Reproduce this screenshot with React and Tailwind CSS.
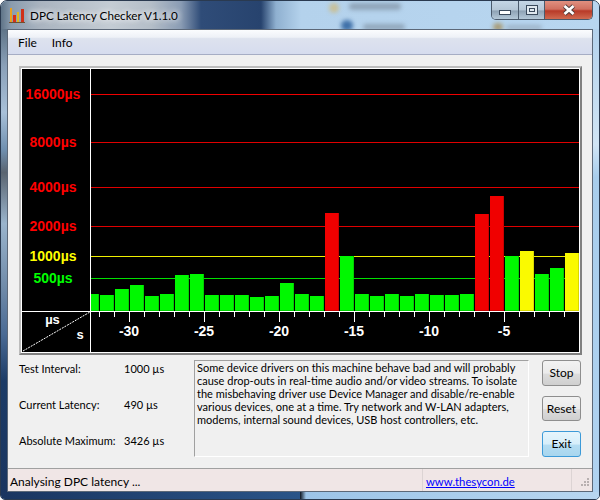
const BARS = [
  [91, 8, 294, 'g'], [100, 14, 295, 'g'], [115, 14, 289, 'g'], [130, 14, 285, 'g'], [145, 14, 296, 'g'],
  [160, 14, 294, 'g'], [175, 14, 275, 'g'], [190, 14, 274, 'g'], [205, 14, 295, 'g'], [220, 14, 295, 'g'],
  [235, 14, 295, 'g'], [250, 14, 297, 'g'], [265, 14, 296, 'g'], [280, 14, 283, 'g'], [295, 14, 294, 'g'],
  [310, 14, 296, 'g'], [325, 14, 213, 'r'], [340, 14, 256, 'g'], [355, 14, 294, 'g'], [370, 14, 296, 'g'],
  [385, 14, 294, 'g'], [400, 14, 296, 'g'], [415, 14, 294, 'g'], [430, 14, 295, 'g'], [445, 14, 295, 'g'],
  [460, 14, 294, 'g'], [475, 14, 214, 'r'], [490, 14, 196, 'r'], [505, 14, 256, 'g'], [520, 14, 251, 'y'],
  [535, 14, 274, 'g'], [550, 14, 268, 'g'], [565, 14, 253, 'y'],
]

const BAR_COLORS = {
  g: ['#00f800', '#00d000'],
  r: ['#f00000', '#c80000'],
  y: ['#fafa00', '#d8d800'],
}

const GRID = [
  { y: 94, base: 99, label: '16000µs', color: '#ff0000', line: '#f00000' },
  { y: 142, base: 147, label: '8000µs', color: '#ff0000', line: '#e00000' },
  { y: 187, base: 192, label: '4000µs', color: '#ff0000', line: '#e00000' },
  { y: 226, base: 231, label: '2000µs', color: '#ff0000', line: '#e00000' },
  { y: 256, base: 261, label: '1000µs', color: '#ffff00', line: '#f0f000' },
  { y: 278, base: 283, label: '500µs', color: '#00ff00', line: '#00e000' },
]

const AXIS = [
  [129, '-30'], [204, '-25'], [279, '-20'], [354, '-15'], [429, '-10'], [504, '-5'],
]

const NOTE = [
  'Some device drivers on this machine behave bad and will probably',
  'cause drop-outs in real-time audio and/or video streams. To isolate',
  'the misbehaving driver use Device Manager and disable/re-enable',
  'various devices, one at a time. Try network and W-LAN adapters,',
  'modems, internal sound devices, USB host controllers, etc.',
]

// the viewBox starts at the chart's page position, so all numbers here are page coordinates
function Chart() {
  const ticks = []
  for (let x = 99; x < 579; x += 15) ticks.push(x)

  return (
    <svg width="557" height="283" viewBox="22 69 557 283" className="block bg-black" shapeRendering="crispEdges">
      {GRID.map((g) => (
        <rect key={g.y} x="91" y={g.y} width="488" height="1" fill={g.line} />
      ))}
      {BARS.map(([x, w, top, c]) => (
        <g key={x}>
          <rect x={x} y={top} width={w} height={311 - top} fill={BAR_COLORS[c][1]} />
          <rect x={x} y={top} width={w - 1} height={310 - top} fill={BAR_COLORS[c][0]} />
        </g>
      ))}
      <rect x="90" y="69" width="1" height="283" fill="#fff" />
      <rect x="22" y="311" width="557" height="1" fill="#fff" />
      {ticks.map((x) => (
        <rect key={x} x={x} y="312" width="1" height={(x - 129) % 75 === 0 ? 10 : 5} fill="#fff" />
      ))}
      <line x1="23" y1="351" x2="90" y2="312" stroke="#fff" strokeDasharray="2 1" shapeRendering="auto" />
      <g fontFamily="'Liberation Sans', sans-serif" fontWeight="700" fontSize="14" textAnchor="middle">
        {GRID.map((g) => (
          <text key={g.label} x="53" y={g.base} fill={g.color}>{g.label}</text>
        ))}
        {AXIS.map(([x, t]) => (
          <text key={t} x={x} y="336" fill="#fff">{t}</text>
        ))}
        <text x="52.5" y="324" fill="#fff" fontSize="13">µs</text>
        <text x="80" y="339" fill="#fff" fontSize="13">s</text>
      </g>
    </svg>
  )
}

function AppIcon() {
  return (
    <svg width="16" height="16" viewBox="0 0 16 16" className="shrink-0" shapeRendering="crispEdges">
      <rect x="1" y="0" width="2" height="15" fill="#e8a020" />
      <rect x="4" y="7" width="3" height="8" fill="#d83018" />
      <rect x="8" y="4" width="2" height="11" fill="#e0b820" />
      <rect x="12" y="1" width="3" height="14" fill="#d03018" />
      <rect x="0" y="14" width="16" height="1" fill="#705030" />
    </svg>
  )
}

function WindowControls() {
  return (
    <div className="flex h-[19px] shrink-0 self-start overflow-hidden rounded-b-[5px] border border-t-0 border-[#4a5a6c]">
      <div className="flex w-[27px] items-center justify-center border-r border-[#4a5a6c] bg-[linear-gradient(#c4d6e6,#b4c6d6_50%,#8ea2b4_55%,#b4c8d8)] pt-[5px]">
        <div className="h-[5px] w-[12px] border border-[#3a4a5c] bg-white" />
      </div>
      <div className="flex w-[26px] items-center justify-center border-r border-[#4a5a6c] bg-[linear-gradient(#c4d6e6,#b4c6d6_50%,#8ea2b4_55%,#b4c8d8)]">
        <div className="flex h-[10px] w-[12px] items-center justify-center border border-[#3a4a5c] bg-[#dfe8ef]">
          <div className="h-[4px] w-[6px] border border-[#3a4a5c]" />
        </div>
      </div>
      <div className="flex w-[47px] items-center justify-center bg-[linear-gradient(#e09080,#d07060_45%,#b83a28_55%,#d06a50)]">
        <svg width="14" height="12" viewBox="0 0 14 12">
          <path d="M2.5 2 L11.5 10 M11.5 2 L2.5 10" stroke="#4a3a3a" strokeWidth="4.5" />
          <path d="M2.5 2 L11.5 10 M11.5 2 L2.5 10" stroke="#fff" strokeWidth="2.8" />
        </svg>
      </div>
    </div>
  )
}

function TitleBar() {
  return (
    <div className="relative flex h-[28px] shrink-0 overflow-hidden bg-[linear-gradient(90deg,#5f7488_0px,#8a9cae_10px,#aab4c0_40px,#c4ccd4_110px,#b4bec8_150px,#8a9cb4_180px,#2f4c78_200px,#27436e_260px,#8fb0d0_275px,#b4d2ec_300px,#b8d6f0_600px)]">
      {/* blurred desktop icons behind the glass */}
      <span className="absolute left-[328px] top-[2px] h-[10px] w-[10px] rounded-full bg-[#c8c098] blur-[2px]" />
      <span className="absolute left-[348px] top-[2px] h-[7px] w-[52px] rounded-full bg-[#8fa4b8] blur-[2px]" />
      <span className="absolute left-[340px] top-[19px] h-[11px] w-[12px] rounded-full bg-[#3f70a8] blur-[2px]" />
      <span className="absolute left-[362px] top-[23px] h-[6px] w-[42px] rounded-full bg-[#90a6ba] blur-[2px]" />
      <span className="absolute left-[492px] top-[22px] h-[8px] w-[10px] rounded-full bg-[#a89c78] blur-[2px]" />
      <span className="absolute left-[505px] top-[24px] h-[5px] w-[36px] rounded-full bg-[#9eb4c8] blur-[2px]" />
      <div className="relative flex flex-1 items-center gap-[5px] pl-[8px] pt-[2px]">
        <AppIcon />
        <span className="text-[11.7px] text-black [text-shadow:0_0_6px_#fff,0_0_6px_#fff]">DPC Latency Checker V1.1.0</span>
      </div>
      <div className="relative mr-[6px]">
        <WindowControls />
      </div>
    </div>
  )
}

function MenuBar() {
  return (
    <div className="flex h-[25px] shrink-0 items-center gap-[15px] border-b border-[#a6adc4] bg-[linear-gradient(#fbfcfe,#eef1f7_30%,#dde2ee_36%,#d6dcee)] pl-[10px] pt-[2px] text-[12px] text-black">
      <span>File</span>
      <span>Info</span>
    </div>
  )
}

function InfoRow({ label, value }) {
  return (
    <div className="flex h-[16px] items-center whitespace-nowrap">
      <span className="w-[105px]">{label}</span>
      <span>{value}</span>
    </div>
  )
}

function Button({ children, focused }) {
  const look = focused
    ? 'border-[#3c9ad8] bg-[linear-gradient(#e6f5fc,#d6eefa_50%,#b4dcf2_55%,#a8d6ee)]'
    : 'border-[#8e8e8e] bg-[linear-gradient(#f2f2f2,#ebebeb_50%,#dcdcdc_55%,#cfcfcf)]'
  return (
    <button type="button" className={`h-[26px] w-[39px] rounded-[3px] border text-[12px] text-black ${look}`}>
      {children}
    </button>
  )
}

function StatusBar() {
  return (
    <div className="flex h-[23px] shrink-0 items-center border-t border-[#a0a0a0] bg-[#f0e6e6] text-[12px] text-black">
      <span className="w-[414px] pl-[2px] pt-[4px]">Analysing DPC latency ...</span>
      <span className="flex h-full w-[150px] items-center border-l border-r border-[#dcd4d4] pl-[3px] pt-[4px] text-[11.3px] text-[#0000ff] underline">
        www.thesycon.de
      </span>
      <svg width="20" height="20" viewBox="0 0 20 20" className="self-end" shapeRendering="crispEdges">
        {[[15, 7], [12, 10], [15, 10], [9, 13], [12, 13], [15, 13]].map(([x, y]) => (
          <rect key={`${x}-${y}`} x={x} y={y} width="2" height="2" fill="#b8b0b0" />
        ))}
      </svg>
    </div>
  )
}

export default function App() {
  return (
    <div className="flex h-[500px] w-[600px] flex-col overflow-hidden rounded-t-[7px] rounded-b-[5px] border border-[#2a3a50] font-['Lato',sans-serif] bg-[#b8d6f0]">
      <TitleBar />
      <div className="flex min-h-0 flex-1">
        <div className="w-[6px] shrink-0 bg-[linear-gradient(#5f7488,#8aa0b8_8%,#a8c0d8_18%,#7090b0_26%,#5a6470_31%,#9ab4cc_42%,#6f8aa8_56%,#4a6a94_66%,#1c3b66_76%,#1a3560_100%)]" />
        <div className="flex min-w-0 flex-1 flex-col border border-[#5c6878] bg-[#f0f0f0]">
          <MenuBar />
          <div className="flex flex-1 flex-col gap-[5px] pl-[11px] pt-[11px]">
            <div className="w-[563px] border-2 border-t-[#bcbcbc] border-l-[#bcbcbc] border-r-[#808080] border-b-[#808080]">
              <div className="border border-white">
                <Chart />
              </div>
            </div>
            <div className="flex h-[97px] text-[11px] text-black">
              <div className="flex w-[175px] flex-col gap-[20px] pt-[1px]">
                <InfoRow label="Test Interval:" value="1000 µs" />
                <InfoRow label="Current Latency:" value="490 µs" />
                <InfoRow label="Absolute Maximum:" value="3426 µs" />
              </div>
              <div className="h-full w-[335px] whitespace-nowrap border border-t-[#a0a0a0] border-l-[#a0a0a0] border-r-white border-b-white pl-[2px] leading-[13px]">
                {NOTE.map((line) => (
                  <div key={line}>{line}</div>
                ))}
              </div>
              <div className="ml-[13px] flex flex-col gap-[10px]">
                <Button>Stop</Button>
                <Button>Reset</Button>
                <Button focused>Exit</Button>
              </div>
            </div>
          </div>
          <StatusBar />
        </div>
        <div className="w-[6px] shrink-0 bg-[linear-gradient(#b4d2ec,#d0e4f4_25%,#a8cdec_32%,#b0d2f0_100%)]" />
      </div>
      <div className="h-[7px] shrink-0 bg-[linear-gradient(90deg,#1a3560,#2a5488_50%,#1a3560_60px,#3a6ca8_200px,#2a4a70_260px,#0c1420_285px,#9cc4e8_305px,#b8d6f0_600px)]" />
    </div>
  )
}
